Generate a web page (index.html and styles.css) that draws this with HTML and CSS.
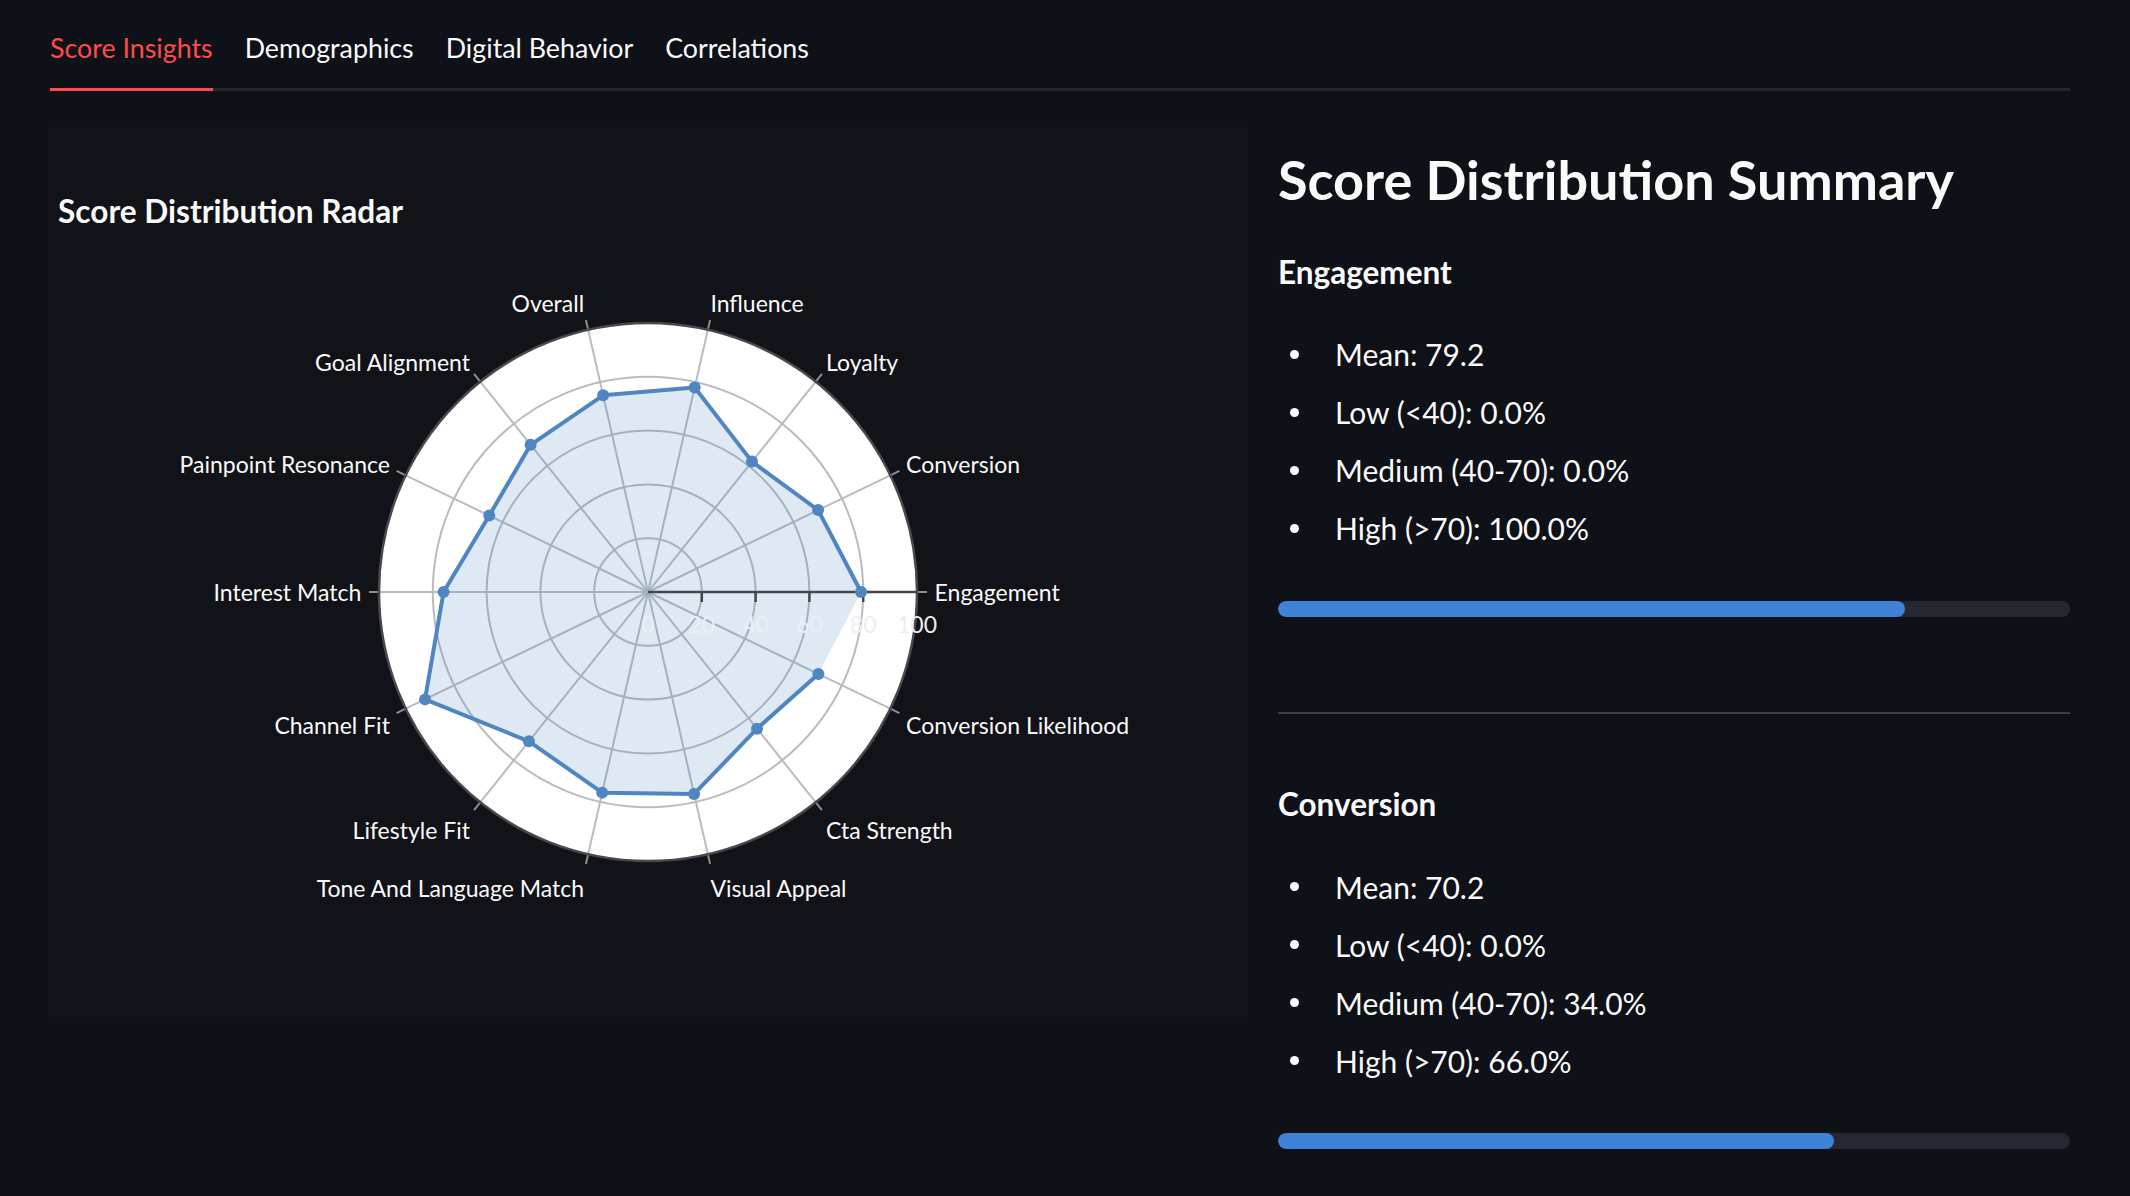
FILE: index.html
```html
<!DOCTYPE html>
<html lang="en">
<head>
<meta charset="utf-8">
<title>Score Insights</title>
<link rel="stylesheet" href="styles.css">
</head>
<body>
<div class="app">
  <nav class="tabs">
    <div class="tab active">Score Insights</div>
    <div class="tab">Demographics</div>
    <div class="tab">Digital Behavior</div>
    <div class="tab">Correlations</div>
  </nav>
  <div class="columns">
    <section class="chart-panel">
      <div class="chart-title">Score Distribution Radar</div>
      <svg class="radar" width="1200" height="794" viewBox="0 0 1200 794">
        <circle cx="600" cy="363" r="269" fill="#ffffff"/>
        <g class="grid" fill="none" stroke="#b8bbc0" stroke-width="2">
          <circle cx="600" cy="363" r="53.8"/>
          <circle cx="600" cy="363" r="107.6"/>
          <circle cx="600" cy="363" r="161.4"/>
          <circle cx="600" cy="363" r="215.2"/>
          <line x1="600" y1="363" x2="842.36" y2="246.29"/>
          <line x1="600" y1="363" x2="767.72" y2="152.69"/>
          <line x1="600" y1="363" x2="659.86" y2="100.74"/>
          <line x1="600" y1="363" x2="540.14" y2="100.74"/>
          <line x1="600" y1="363" x2="432.28" y2="152.69"/>
          <line x1="600" y1="363" x2="357.64" y2="246.29"/>
          <line x1="600" y1="363" x2="331" y2="363"/>
          <line x1="600" y1="363" x2="357.64" y2="479.71"/>
          <line x1="600" y1="363" x2="432.28" y2="573.31"/>
          <line x1="600" y1="363" x2="540.14" y2="625.26"/>
          <line x1="600" y1="363" x2="659.86" y2="625.26"/>
          <line x1="600" y1="363" x2="767.72" y2="573.31"/>
          <line x1="600" y1="363" x2="842.36" y2="479.71"/>
        </g>
        <g class="ticks" stroke="#8a8d93" stroke-width="2">
          <line x1="869" y1="363" x2="879" y2="363"/>
          <line x1="842.36" y1="246.29" x2="851.37" y2="241.95"/>
          <line x1="767.72" y1="152.69" x2="773.95" y2="144.87"/>
          <line x1="659.86" y1="100.74" x2="662.08" y2="90.99"/>
          <line x1="540.14" y1="100.74" x2="537.92" y2="90.99"/>
          <line x1="432.28" y1="152.69" x2="426.05" y2="144.87"/>
          <line x1="357.64" y1="246.29" x2="348.63" y2="241.95"/>
          <line x1="331" y1="363" x2="321" y2="363"/>
          <line x1="357.64" y1="479.71" x2="348.63" y2="484.05"/>
          <line x1="432.28" y1="573.31" x2="426.05" y2="581.13"/>
          <line x1="540.14" y1="625.26" x2="537.92" y2="635.01"/>
          <line x1="659.86" y1="625.26" x2="662.08" y2="635.01"/>
          <line x1="767.72" y1="573.31" x2="773.95" y2="581.13"/>
          <line x1="842.36" y1="479.71" x2="851.37" y2="484.05"/>
        </g>
        <polygon points="813.05,363 770.14,281.07 703.99,232.61 646.69,158.44 555.11,166.31 482.6,215.78 441.25,286.55 395.56,363 377.03,470.38 480.92,512.32 554.21,563.63 646.09,564.94 709.02,499.7 770.38,445.05" fill="rgba(79,134,193,0.18)"/>
        <circle cx="600" cy="363" r="269" fill="none" stroke="#46484c" stroke-width="2.5"/>
        <g class="raxis" stroke="#444649" stroke-width="2.5">
          <line x1="600" y1="363" x2="869" y2="363"/>
          <line x1="653.8" y1="363" x2="653.8" y2="373"/>
          <line x1="707.6" y1="363" x2="707.6" y2="373"/>
          <line x1="761.4" y1="363" x2="761.4" y2="373"/>
          <line x1="815.2" y1="363" x2="815.2" y2="373"/>
        </g>
        <polyline points="813.05,363 770.14,281.07 703.99,232.61 646.69,158.44 555.11,166.31 482.6,215.78 441.25,286.55 395.56,363 377.03,470.38 480.92,512.32 554.21,563.63 646.09,564.94 709.02,499.7 770.38,445.05" fill="none" stroke="#4f86c1" stroke-width="4" stroke-linejoin="round"/>
        <g class="markers" fill="#4f86c1">
          <circle cx="813.05" cy="363" r="6"/>
          <circle cx="770.14" cy="281.07" r="6"/>
          <circle cx="703.99" cy="232.61" r="6"/>
          <circle cx="646.69" cy="158.44" r="6"/>
          <circle cx="555.11" cy="166.31" r="6"/>
          <circle cx="482.6" cy="215.78" r="6"/>
          <circle cx="441.25" cy="286.55" r="6"/>
          <circle cx="395.56" cy="363" r="6"/>
          <circle cx="377.03" cy="470.38" r="6"/>
          <circle cx="480.92" cy="512.32" r="6"/>
          <circle cx="554.21" cy="563.63" r="6"/>
          <circle cx="646.09" cy="564.94" r="6"/>
          <circle cx="709.02" cy="499.7" r="6"/>
          <circle cx="770.38" cy="445.05" r="6"/>
        </g>
        <g class="rlabels" text-anchor="middle">
          <text x="600" y="403.7">0</text>
          <text x="653.8" y="403.7">20</text>
          <text x="707.6" y="403.7">40</text>
          <text x="761.4" y="403.7">60</text>
          <text x="815.2" y="403.7">80</text>
          <text x="869" y="403.7">100</text>
        </g>
        <g class="alabels">
          <text x="886.6" y="371.5">Engagement</text>
          <text x="858" y="244">Conversion</text>
          <text x="778" y="142">Loyalty</text>
          <text x="662.4" y="82.5">Influence</text>
          <text x="536.1" y="82.5" text-anchor="end">Overall</text>
          <text x="422" y="142" text-anchor="end">Goal Alignment</text>
          <text x="341.9" y="244" text-anchor="end">Painpoint Resonance</text>
          <text x="313.3" y="371.5" text-anchor="end">Interest Match</text>
          <text x="341.9" y="505" text-anchor="end">Channel Fit</text>
          <text x="422" y="609.5" text-anchor="end">Lifestyle Fit</text>
          <text x="536.1" y="668" text-anchor="end">Tone And Language Match</text>
          <text x="662.4" y="668">Visual Appeal</text>
          <text x="778" y="609.5">Cta Strength</text>
          <text x="858" y="505">Conversion Likelihood</text>
        </g>
      </svg>
    </section>
    <section class="summary">
      <h2 class="summary-title">Score Distribution Summary</h2>
      <div class="metric">
        <h4 class="metric-name">Engagement</h4>
        <ul class="stats">
          <li>Mean: 79.2</li>
          <li>Low (&lt;40): 0.0%</li>
          <li>Medium (40-70): 0.0%</li>
          <li>High (&gt;70): 100.0%</li>
        </ul>
        <div class="progress"><div class="progress-fill" style="width:79.2%"></div></div>
      </div>
      <hr class="divider">
      <div class="metric">
        <h4 class="metric-name">Conversion</h4>
        <ul class="stats">
          <li>Mean: 70.2</li>
          <li>Low (&lt;40): 0.0%</li>
          <li>Medium (40-70): 34.0%</li>
          <li>High (&gt;70): 66.0%</li>
        </ul>
        <div class="progress"><div class="progress-fill" style="width:70.2%"></div></div>
      </div>
    </section>
  </div>
</div>
</body>
</html>
```
FILE: styles.css
```css
html, body {
  margin: 0;
  background: #0e1117;
  color: #fafafa;
  font-family: Lato, "Noto Sans", "DejaVu Sans", sans-serif;
  overflow: hidden;
}

.app {
  padding: 0 60px 0 48px;
}

.tabs {
  display: flex;
  gap: 32px;
  margin-left: 2px;
  border-bottom: 3px solid #262730;
}

.tab {
  padding: 28px 0 19.5px;
  line-height: 40px;
  font-size: 26.8px;
  color: #fafafa;
  border-bottom: 3px solid transparent;
  margin-bottom: -3px;
  white-space: nowrap;
}

.tab.active {
  color: #ff4b4b;
  border-bottom-color: #ff4b4b;
}

.columns {
  display: grid;
  grid-template-columns: 1200px 792px;
  column-gap: 30px;
  margin-top: 31.5px;
  align-items: start;
}

.chart-panel {
  background: #111319;
  height: 901px;
}

.chart-title {
  padding: 71px 0 0 10px;
  font-size: 31.6px;
  line-height: 36px;
  font-weight: 700;
}

.radar {
  display: block;
}

.radar text {
  font-family: Lato, "Noto Sans", sans-serif;
  font-size: 23px;
  fill: #fafafa;
}

.radar .rlabels text {
  fill: #eceef3;
}

.summary-title {
  margin: 26px 0 0;
  font-size: 54px;
  line-height: 64px;
  font-weight: 700;
}

.metric-name {
  margin: 39.8px 0 0;
  font-size: 31.5px;
  line-height: 40px;
  font-weight: 700;
}

.divider + .metric .metric-name {
  margin-top: 70.4px;
}

.stats {
  list-style: none;
  margin: 42.5px 0 0;
  padding: 0;
}

.stats li {
  display: flex;
  align-items: center;
  height: 40px;
  line-height: 40px;
  font-size: 30px;
  margin-bottom: 18px;
}

.stats li:last-child {
  margin-bottom: 0;
}

.stats li::before {
  content: "";
  flex: none;
  width: 9px;
  height: 9px;
  border-radius: 50%;
  background: #fafafa;
  margin: 0 36px 0 12px;
}

.progress {
  margin-top: 52.6px;
  height: 16px;
  border-radius: 8px;
  background: #262730;
  overflow: hidden;
}

.progress-fill {
  height: 100%;
  background: #3f83d9;
  border-radius: 8px;
}

.divider {
  margin: 95px 0 0;
  height: 2px;
  border: none;
  background: #3d3f44;
}
```
